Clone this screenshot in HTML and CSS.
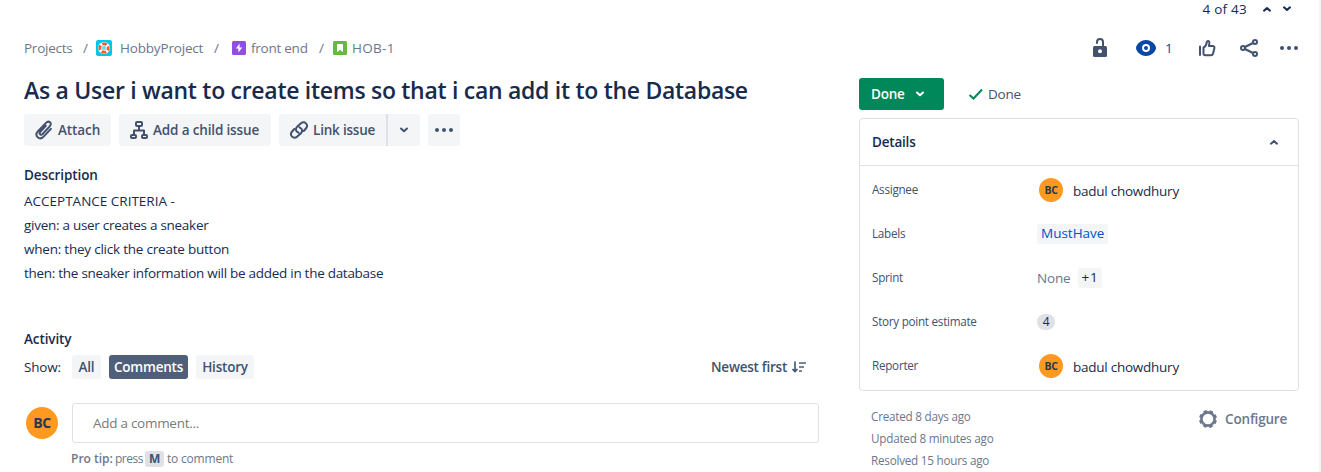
FILE: index.html
```html
<!DOCTYPE html>
<html lang="en">
<head>
<meta charset="utf-8">
<title>HOB-1</title>
<link rel="stylesheet" href="styles.css">
</head>
<body>
<div class="page">
  <div class="pager">
    <span class="pager-text">4 of 43</span>
    <svg class="chev" width="10" height="8" viewBox="0 0 10 8"><path d="M2 5.700 5 3l3 2.700"/></svg>
    <svg class="chev" width="10" height="8" viewBox="0 0 10 8"><path d="M2 2.300 5 5l3-2.700"/></svg>
  </div>
  <header class="topbar">
    <nav class="crumbs">
      <span class="c-projects">Projects</span>
      <span class="slash">/</span>
      <svg class="i-project" width="16" height="16" viewBox="0 0 16 16"><rect width="16" height="16" rx="2" fill="#00c7e5"/><circle cx="8" cy="8" r="4.200" fill="#fff" stroke="#fff" stroke-width="3.600"/><circle cx="8" cy="8" r="4.200" fill="none" stroke="#ff5630" stroke-width="2.800" stroke-dasharray="4.600 2" stroke-dashoffset="2.300"/><circle cx="8" cy="8" r="2.200" fill="#79dceb"/></svg>
      <span class="c-hobby">HobbyProject</span>
      <span class="slash">/</span>
      <svg class="i-epic" width="14" height="14" viewBox="0 0 14 14"><rect width="14" height="14" rx="1.500" fill="#904ee2"/><path d="M7.600 2.600 3.900 7.600h2.500v3.800l3.900-5H7.600z" fill="#fff"/></svg>
      <span class="c-epic">front end</span>
      <span class="slash">/</span>
      <svg class="i-story" width="14" height="14" viewBox="0 0 14 14"><rect width="14" height="14" rx="1.500" fill="#63ba3c"/><path d="M4.500 3.500h5v7L7 8.300 4.500 10.500z" fill="#fff" stroke="#fff" stroke-linejoin="round"/></svg>
      <span class="c-key">HOB-1</span>
    </nav>
    <div class="tools">
      <svg class="t-lock" width="16" height="20" viewBox="0 0 16 20"><rect x="1" y="8" width="14" height="11" rx="1.500" fill="#42526e"/><path d="M5 5V4a3 3 0 0 1 6 0v4" fill="none" stroke="#42526e" stroke-width="2" stroke-linecap="round"/><circle cx="8" cy="13.300" r="2" fill="#fff"/></svg>
      <svg class="t-eye" width="20" height="16" viewBox="0 0 20 16"><path d="M10 0C4.500 0 0 4.900 0 8s4.500 8 10 8 10-4.900 10-8S15.500 0 10 0z" fill="#0747a6"/><circle cx="10" cy="8" r="3" fill="#0747a6" stroke="#fff" stroke-width="2"/></svg>
      <span class="watchers">1</span>
      <svg class="t-like line" width="18" height="18" viewBox="0 0 18 18"><path d="M2 7.500V16M5.500 14.500V8.500C7.800 7.500 8.600 5.500 8.800 3.200 9 1.400 11.600 1.700 11.400 4.200L10.900 7h3.700c1.400 0 2.100.9 1.800 2.100l-1.300 5.300c-.3 1.200-1 1.800-2.200 1.800H7.300c-1 0-1.800-.7-1.800-1.700z"/></svg>
      <svg class="t-share line" width="20" height="20" viewBox="0 0 20 20"><circle cx="4" cy="10" r="2"/><circle cx="16" cy="4" r="2"/><circle cx="16" cy="16" r="2"/><path d="M6 9l8-4M6 11l8 4"/></svg>
      <svg class="dots" width="20" height="6" viewBox="0 0 20 6"><circle cx="3" cy="3" r="2"/><circle cx="10" cy="3" r="2"/><circle cx="17" cy="3" r="2"/></svg>
    </div>
  </header>
  <div class="columns">
    <main class="main">
      <h1 class="title">As a User i want to create items so that i can add it to the Database</h1>
      <div class="actions">
        <button class="btn b-attach"><svg class="line" width="18" height="20" viewBox="0 0 18 20"><path d="M10.800 5.800 5.300 11.700c-1.700 1.900.5 4.100 2.300 2.300l7.100-7.600c3-3.300-.9-6.400-3.700-3.500L3 11.200c-4.200 4.600 1.500 9.700 5.600 5.400l7.300-7.700"/></svg><span>Attach</span></button>
        <button class="btn b-child"><svg class="line" width="18" height="20" viewBox="0 0 18 20"><rect x="6" y="2" width="6" height="4" rx="1"/><rect x="1" y="15" width="5" height="3" rx="1"/><rect x="12" y="15" width="5" height="3" rx="1"/><path d="M9 6v4M4 14v-3.500h10V14"/></svg><span>Add a child issue</span></button>
        <div class="split">
          <button class="btn b-link"><svg class="line" width="20" height="20" viewBox="0 0 20 20"><path d="M9.500 12.700c-4-2-2.800-4.800-.7-6.700l3-2.600c3.800-3 8.200 1.300 5.100 5.100L14.700 11M10.500 7.300c4 2 2.800 4.800.7 6.700l-3 2.600c-3.800 3-8.200-1.300-5.100-5.100L5.300 9"/></svg><span>Link issue</span></button>
          <button class="btn b-drop"><svg class="chev" width="10" height="8" viewBox="0 0 10 8"><path d="M2 2.500 5 5.300l3-2.800"/></svg></button>
        </div>
        <button class="btn b-more"><svg class="dots" width="20" height="6" viewBox="0 0 20 6"><circle cx="3" cy="3" r="2"/><circle cx="10" cy="3" r="2"/><circle cx="17" cy="3" r="2"/></svg></button>
      </div>
      <h2 class="h h-desc">Description</h2>
      <div class="desc">
        <p class="d1">ACCEPTANCE CRITERIA -</p>
        <p class="d2">given: a user creates a sneaker</p>
        <p class="d3">when: they click the create button</p>
        <p class="d4">then: the sneaker information will be added in the database</p>
      </div>
      <h2 class="h h-act">Activity</h2>
      <div class="filters">
        <span class="show">Show:</span>
        <button class="tab t-all">All</button>
        <button class="tab t-com on">Comments</button>
        <button class="tab t-his">History</button>
        <div class="sort"><span>Newest first</span><svg width="14" height="12" viewBox="0 0 14 12"><path d="M3 .5v10M.5 8 3 10.500 5.500 8" fill="none" stroke="#42526e" stroke-width="1.600"/><path d="M7 2h7M7 6h5M7 10h3" stroke="#7a869a" stroke-width="2"/></svg></div>
      </div>
      <div class="comment">
        <span class="avatar big">BC</span>
        <div class="box">Add a comment...</div>
      </div>
      <div class="tip"><b>Pro tip:</b><span class="w1">press</span><kbd>M</kbd><span class="w2">to comment</span></div>
    </main>
    <aside class="side">
      <div class="status">
        <button class="done">Done<svg class="chev" width="10" height="8" viewBox="0 0 10 8"><path d="M2 2.500 5 5.300l3-2.800"/></svg></button>
        <svg width="16" height="14" viewBox="0 0 16 14"><path d="M1.500 8 5.500 11.500 14 2.500" fill="none" stroke="#00875a" stroke-width="2"/></svg>
        <span class="res">Done</span>
      </div>
      <section class="details">
        <div class="dhead"><span>Details</span><svg class="chev" width="10" height="8" viewBox="0 0 10 8"><path d="M2 5.700 5 3l3 2.700"/></svg></div>
        <dl class="fields">
          <dt>Assignee</dt><dd class="person"><span class="avatar">BC</span><span class="name">badul chowdhury</span></dd>
          <dt>Labels</dt><dd><span class="label">MustHave</span></dd>
          <dt>Sprint</dt><dd><span class="none">None</span><span class="plus">+1</span></dd>
          <dt>Story point estimate</dt><dd><span class="points">4</span></dd>
          <dt>Reporter</dt><dd class="person"><span class="avatar">BC</span><span class="name">badul chowdhury</span></dd>
        </dl>
      </section>
      <footer class="foot">
        <div class="dates"><p>Created 8 days ago</p><p>Updated 8 minutes ago</p><p>Resolved 15 hours ago</p></div>
        <div class="config"><svg width="20" height="20" viewBox="0 0 20 20"><circle cx="10" cy="10" r="6.600" fill="none" stroke="#6b778c" stroke-width="2.600"/><circle cx="10" cy="10" r="8" fill="none" stroke="#6b778c" stroke-width="2" stroke-dasharray="3.400 2.883" stroke-dashoffset="-1.442"/></svg><span>Configure</span></div>
      </footer>
    </aside>
  </div>
</div>
</body>
</html>
```
FILE: styles.css
```css
* { box-sizing: border-box; margin: 0; padding: 0; }
body { font: 13.5px/20px "Open Sans", "Noto Sans", sans-serif; letter-spacing: -0.2px; color: #172b4d; background: #fff; overflow: hidden; }
button { font: inherit; letter-spacing: inherit; border: 0; color: inherit; }
svg { flex: none; display: block; }
span, b, p, h1, h2, dt { white-space: nowrap; }
.page { width: 1321px; height: 472px; border-right: 2px solid #f4f4f4; overflow: hidden; }
.line { fill: none; stroke: #42526e; stroke-width: 2; stroke-linecap: round; stroke-linejoin: round; }
.chev { fill: none; stroke: currentColor; stroke-width: 2; stroke-linecap: round; stroke-linejoin: round; }
.dots { fill: #42526e; }
.pager { height: 18px; display: flex; justify-content: flex-end; align-items: center; gap: 10px; padding-right: 27px; }
.pager-text { letter-spacing: 0.25px; margin-right: 5px; }
.topbar { height: 54px; padding: 18px 20px 12px 24px; display: flex; justify-content: space-between; align-items: center; }
.crumbs { display: flex; align-items: center; color: #6b778c; letter-spacing: -0.25px; }
.c-projects { width: 59px; }
.slash { width: 13px; }
.c-hobby { width: 94px; margin-left: 8px; letter-spacing: -0.18px; }
.i-epic { margin-left: 5px; }
.c-epic { width: 68px; margin-left: 5px; }
.i-story { margin-left: 1px; }
.c-key { margin-left: 5px; letter-spacing: 0.3px; }
.tools { display: flex; align-items: center; }
.t-eye { margin-left: 28px; }
.watchers { color: #0747a6; width: 8px; margin-left: 9px; }
.t-like { margin-left: 25px; }
.t-share { margin-left: 23px; }
.tools .dots { margin-left: 20px; }
.columns { display: grid; grid-template-columns: 795px 440px; column-gap: 40px; padding-left: 24px; }
.title { font-size: 23px; line-height: 36px; font-weight: 600; letter-spacing: -0.29px; }
.actions { display: flex; gap: 8px; margin-top: 6px; }
.btn { height: 32px; display: flex; align-items: center; border-radius: 3px; background: #f4f5f7; color: #42526e; font-weight: 600; }
.b-attach { width: 87px; padding-left: 11px; gap: 5px; letter-spacing: -0.1px; }
.b-child { width: 152px; padding-left: 11px; gap: 5px; letter-spacing: -0.15px; }
.split { display: flex; }
.b-link { width: 107px; padding-left: 10px; gap: 4px; border-radius: 3px 0 0 3px; }
.b-drop { width: 34px; justify-content: center; border-left: 2px solid #dfe1e6; border-radius: 0 3px 3px 0; }
.b-more { width: 32px; justify-content: center; }
.h { font-size: 13.5px; font-weight: 600; line-height: 20px; letter-spacing: -0.1px; }
.h-desc { margin-top: 19px; }
.desc { margin-top: 4px; line-height: 24px; letter-spacing: -0.28px; }
.desc .d1 { letter-spacing: 0; }
.desc .d3 { letter-spacing: -0.22px; }
.h-act { margin-top: 44px; }
.filters { height: 24px; margin-top: 6px; display: flex; align-items: center; }
.show { width: 48px; }
.tab { height: 24px; border-radius: 3px; background: #f4f5f7; color: #42526e; font-weight: 600; text-align: center; white-space: nowrap; }
.t-all { width: 29px; }
.t-com { width: 79px; margin: 0 8px; letter-spacing: -0.35px; }
.t-com, .t-his, .t-all { flex: none; }
.on { background: #505f79; color: #fff; letter-spacing: -0.2px; }
.t-his { width: 58px; }
.sort { margin-left: auto; padding-right: 13px; display: flex; align-items: center; gap: 5px; color: #42526e; font-weight: 600; letter-spacing: -0.25px; }
.comment { margin-top: 24px; display: flex; align-items: center; height: 40px; padding-left: 2px; }
.avatar { width: 24px; height: 24px; border-radius: 50%; background: #ff991f; color: #253858; font-size: 10.5px; line-height: 24px; font-weight: 700; text-align: center; letter-spacing: -0.3px; }
.big { width: 32px; height: 32px; line-height: 32px; font-size: 14px; }
.box { flex: 1; height: 40px; margin-left: 14px; border: 1px solid #dfe1e6; border-radius: 3px; padding-left: 20px; line-height: 38px; letter-spacing: -0.28px; color: #7a7a7a; }
.tip { margin: 6px 0 0 47px; height: 20px; display: flex; align-items: center; font-size: 12px; color: #6b778c; }
.tip b { font-weight: 600; width: 44px; letter-spacing: 0; }
.w1 { width: 30px; letter-spacing: -0.5px; }
kbd { width: 19px; height: 16px; margin-right: 3px; border-radius: 3px; background: #dfe1e6; color: #42526e; font: 700 12px/16px "Open Sans", sans-serif; text-align: center; }
.status { height: 32px; margin-top: 6px; display: flex; align-items: center; }
.done { width: 85px; height: 32px; padding-left: 12px; display: flex; align-items: center; gap: 10px; border-radius: 3px; background: #00875a; color: #fff; font-weight: 600; margin-right: 24px; }
.res { margin-left: 4px; color: #42526e; }
.details { margin-top: 8px; height: 273px; border: 1px solid #dfe1e6; border-radius: 4px; }
.dhead { height: 47px; border-bottom: 1px solid #dfe1e6; display: flex; align-items: center; justify-content: space-between; padding: 0 19px 0 12px; font-weight: 600; }
.dhead .chev { color: #42526e; }
.fields { display: grid; grid-template-columns: 165px 1fr; grid-auto-rows: 44px; padding: 2px 0 0 12px; align-items: center; }
.fields dt { font-size: 11.7px; letter-spacing: -0.27px; padding-bottom: 2px; color: #42526e; }
.fields dd { display: flex; align-items: center; }
.person { padding-left: 2px; }
.name { margin: 1px 0 0 10px; letter-spacing: -0.25px; }
.label, .plus { height: 20px; line-height: 19px; border-radius: 3px; background: #f4f5f7; }
.label { width: 71px; padding-left: 4px; color: #0052cc; letter-spacing: 0; }
.none { width: 41px; color: #6b778c; }
.plus { width: 24px; text-align: center; letter-spacing: 0.8px; color: #172b4d; }
.points { width: 18px; height: 16px; border-radius: 8px; background: #dfe1e6; font-size: 12px; line-height: 16px; text-align: center; }
.foot { display: flex; justify-content: space-between; padding: 14px 12px 0 12px; color: #6b778c; }
.dates { font-size: 11.7px; line-height: 22px; letter-spacing: -0.23px; }
.config { height: 28px; display: flex; align-items: center; gap: 7px; font-weight: 600; }
```
